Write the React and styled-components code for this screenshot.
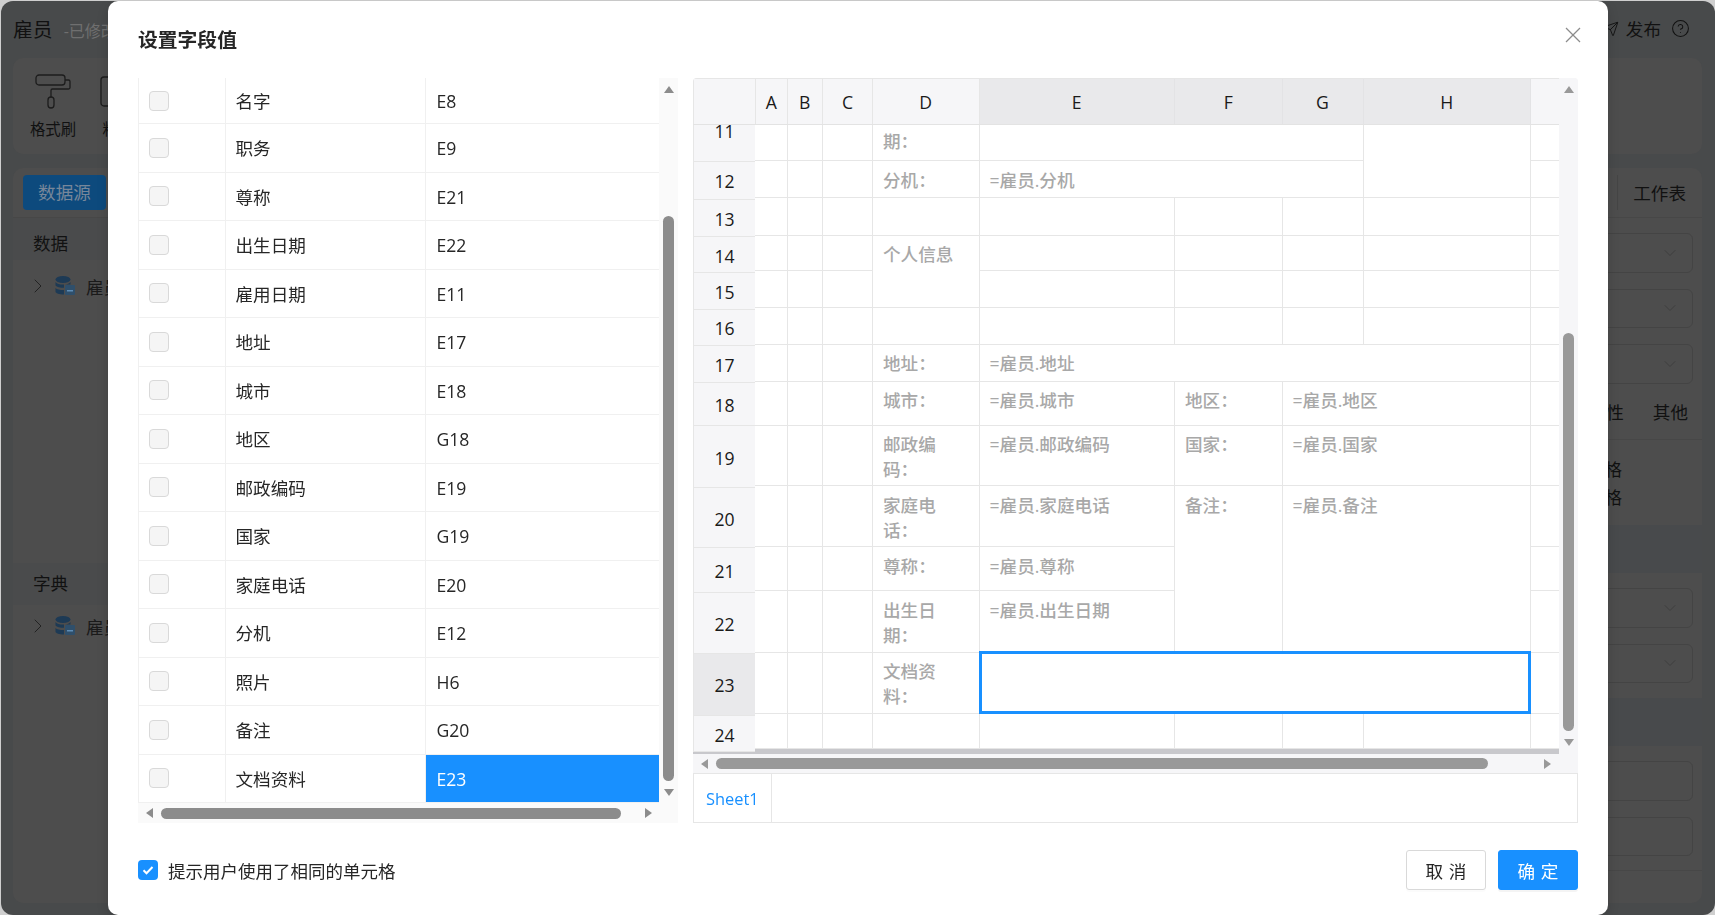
import React from 'react';
import styled, { createGlobalStyle } from 'styled-components';
import { Send, CircleHelp, ChevronDown, ChevronRight } from 'lucide-react';

const HEAD_COLS = '32.5px 35.5px 50px 106.5px 195.5px 107.5px 81px 167.5px 28px';
const CELL_COLS = '32.5px 35.5px 50px 106.5px 195.5px 107.5px 81px 167.5px 29px';

const fields = [
  ['名字', 'E8'],
  ['职务', 'E9'],
  ['尊称', 'E21'],
  ['出生日期', 'E22'],
  ['雇用日期', 'E11'],
  ['地址', 'E17'],
  ['城市', 'E18'],
  ['地区', 'G18'],
  ['邮政编码', 'E19'],
  ['国家', 'G19'],
  ['家庭电话', 'E20'],
  ['分机', 'E12'],
  ['照片', 'H6'],
  ['备注', 'G20'],
  ['文档资料', 'E23'],
];

const columns = [
  { name: 'A' },
  { name: 'B' },
  { name: 'C' },
  { name: 'D' },
  { name: 'E', active: true },
  { name: 'F', active: true },
  { name: 'G', active: true },
  { name: 'H', active: true },
  { name: '' },
];

const rowHeads = [
  [11, 63],
  [12, 37.5],
  [13, 37.5],
  [14, 36],
  [15, 36.5],
  [16, 36.5],
  [17, 37],
  [18, 43],
  [19, 62],
  [20, 60],
  [21, 45],
  [22, 60.5],
  [23, 62.5],
  [24, 36],
];

const rowHeights = [63.5, 37, 37.5, 35.5, 37, 36.5, 37, 44, 60.5, 61, 44, 61.5, 61, 35.5];

const blank = (n = 1) => Array.from({ length: n }, () => ({}));

// one entry per row, merged cells carry col / row spans
const sheetRows = [
  [...blank(3), { text: '雇用日期：' }, { text: '=雇员.雇用日期', col: 3 }, { row: 2 }, {}],
  [...blank(3), { text: '分机：' }, { text: '=雇员.分机', col: 3 }, {}],
  blank(9),
  [...blank(3), { text: '个人信息', row: 2 }, ...blank(5)],
  [...blank(3), ...blank(5)],
  blank(9),
  [...blank(3), { text: '地址：' }, { text: '=雇员.地址', col: 4 }, {}],
  [...blank(3), { text: '城市：' }, { text: '=雇员.城市' }, { text: '地区：' }, { text: '=雇员.地区', col: 2 }, {}],
  [...blank(3), { text: '邮政编码：' }, { text: '=雇员.邮政编码' }, { text: '国家：' }, { text: '=雇员.国家', col: 2 }, {}],
  [...blank(3), { text: '家庭电话：' }, { text: '=雇员.家庭电话' }, { text: '备注：', row: 3 }, { text: '=雇员.备注', col: 2, row: 3 }, {}],
  [...blank(3), { text: '尊称：' }, { text: '=雇员.尊称' }, {}],
  [...blank(3), { text: '出生日期：' }, { text: '=雇员.出生日期' }, {}],
  [...blank(3), { text: '文档资料：' }, { col: 4, selected: true }, {}],
  blank(9),
];

const App = () => {
  return (
    <>
      <GlobalStyle />
      <Page>
        <TopBar>
          <DocTitle>
            雇员 <DocState>-已修改</DocState>
          </DocTitle>
          <TopActions>
            <Send size={16} strokeWidth={1.4} />
            <span>发布</span>
            <CircleHelp size={19} strokeWidth={1.3} />
          </TopActions>
        </TopBar>

        <ToolPanel>
          <ToolItem>
            <svg width="36" height="36" viewBox="0 0 36 36" fill="none" stroke="#1c1c1c" strokeWidth="1.3">
              <rect x="1" y="1" width="29" height="10" rx="3" />
              <path d="M30 6h3.5a1.5 1.5 0 0 1 1.5 1.5v6a1.5 1.5 0 0 1-1.5 1.5H17.5a1.5 1.5 0 0 0-1.5 1.5V23" />
              <rect x="13" y="23" width="6" height="11" rx="3" />
            </svg>
            <span>格式刷</span>
          </ToolItem>
          <ToolItem>
            <svg width="36" height="36" viewBox="0 0 36 36" fill="none" stroke="#1c1c1c" strokeWidth="1.3">
              <rect x="1" y="3" width="30" height="29" rx="3" />
            </svg>
            <span>粘贴</span>
          </ToolItem>
        </ToolPanel>

        <MainPanel>
          <PanelTabs>
            <SourceButton>数据源</SourceButton>
            <SheetTab>工作表</SheetTab>
          </PanelTabs>
          <PanelColumns>
            <LeftColumn>
              <SectionHead>数据</SectionHead>
              <TreeRow $height={52}>
                <ChevronRight size={24} strokeWidth={1} color="#222" />
                <DbIcon />
                <span>雇员</span>
              </TreeRow>
              <TreeSpacer />
              <SectionHead $raised>字典</SectionHead>
              <TreeRow $height={42}>
                <ChevronRight size={24} strokeWidth={1} color="#222" />
                <DbIcon />
                <span>雇员</span>
              </TreeRow>
            </LeftColumn>

            <RightColumn>
              <SelectGroup $height={307}>
                <Select><ChevronDown size={20} strokeWidth={1} /></Select>
                <Select><ChevronDown size={20} strokeWidth={1} /></Select>
                <Select><ChevronDown size={20} strokeWidth={1} /></Select>
                <PropTabs>
                  <span>属性</span>
                  <span>其他</span>
                </PropTabs>
                <CheckLines>
                  <span>显示表格</span>
                  <span>隐藏表格</span>
                </CheckLines>
              </SelectGroup>
              <DarkBand />
              <SelectGroup $height={125}>
                <Select><ChevronDown size={20} strokeWidth={1} /></Select>
                <Select><ChevronDown size={20} strokeWidth={1} /></Select>
              </SelectGroup>
              <DarkBand />
              <SelectGroup $height={125} $line>
                <Select />
                <Select />
              </SelectGroup>
            </RightColumn>
          </PanelColumns>
        </MainPanel>
      </Page>

      <Overlay>
        <Modal>
          <ModalHeader>
            <ModalTitle>设置字段值</ModalTitle>
            <CloseButton>
              <svg width="16" height="16" viewBox="0 0 16 16" stroke="#8c8c8c" strokeWidth="1.3">
                <line x1="1" y1="1" x2="15" y2="15" />
                <line x1="15" y1="1" x2="1" y2="15" />
              </svg>
            </CloseButton>
          </ModalHeader>

          <ModalBody>
            <FieldPane>
              <FieldList>
                {fields.map(([name, cell], idx) => (
                  <FieldRow key={name} $first={idx === 0}>
                    <FieldCheck>
                      <EmptyCheck />
                    </FieldCheck>
                    <FieldName>{name}</FieldName>
                    <FieldCell $selected={cell === 'E23'}>{cell}</FieldCell>
                  </FieldRow>
                ))}
              </FieldList>
              <VTrack $bg="#fafafa" $color="#8c8c8c">
                <ArrowUp />
                <VThumb $gap={123} $height={565} />
                <ArrowDown />
              </VTrack>
              <FieldHTrack $bg="#fafafa" $color="#8c8c8c" $pad={8}>
                <ArrowLeft />
                <HThumb $gap={8} $width={460} />
                <ArrowRight $gap={24} />
              </FieldHTrack>
            </FieldPane>

            <SheetPane>
              <SheetGrid>
                <SheetHeader>
                  <Corner />
                  <HeaderCols>
                    {columns.map((c, idx) => (
                      <ColHead key={idx} $active={c.active} $first={idx === 0}>{c.name}</ColHead>
                    ))}
                  </HeaderCols>
                </SheetHeader>
                <SheetBody>
                  <RowHeads>
                    {rowHeads.map(([n, h]) => (
                      <RowHead key={n} $height={h} $active={n === 23}>{n}</RowHead>
                    ))}
                  </RowHeads>
                  <CellGrid>
                    {sheetRows.flat().map((c, idx) => (
                      <Cell key={idx} $col={c.col} $row={c.row} $selected={c.selected}>{c.text}</Cell>
                    ))}
                  </CellGrid>
                </SheetBody>
                <HTrack $bg="#f6f6f8" $color="#999" $pad={8}>
                  <ArrowLeft />
                  <HThumb $gap={8} $width={772} />
                  <ArrowRight $gap={56} />
                </HTrack>
                <SheetVTrack $bg="#f6f6f8" $color="#999">
                  <ArrowUp />
                  <VThumb $gap={240} $height={398} />
                  <ArrowDown />
                </SheetVTrack>
              </SheetGrid>
              <SheetTabs>
                <SheetName>Sheet1</SheetName>
              </SheetTabs>
            </SheetPane>
          </ModalBody>

          <ModalFooter>
            <CheckLabel>
              <CheckedBox>
                <svg width="14" height="14" viewBox="0 0 14 14" fill="none" stroke="#fff" strokeWidth="2">
                  <path d="M2.5 7.2l3 3 6-6.2" />
                </svg>
              </CheckedBox>
              提示用户使用了相同的单元格
            </CheckLabel>
            <FooterButtons>
              <CancelButton>取 消</CancelButton>
              <OkButton>确 定</OkButton>
            </FooterButtons>
          </ModalFooter>
        </Modal>
      </Overlay>
    </>
  );
};

const DbIcon = () => (
  <svg width="20" height="20" viewBox="0 0 20 20">
    <ellipse cx="8" cy="3.5" rx="7.5" ry="3.5" fill="#1d3a55" />
    <path d="M.5 6c1.5 2 4 2.6 7.5 2.6S14 8 15.5 6v2.4H9v3.4c-4 0-7.2-.8-8.5-2.4z" fill="#1d3a55" />
    <path d="M.5 12c1.5 1.4 4 2 8.5 2v4.6c-4.6 0-8.5-1-8.5-3z" fill="#1d3a55" />
    <rect x="10" y="9" width="10" height="10" rx="1" fill="#2f4f6b" />
    <rect x="12" y="14" width="6" height="1.5" fill="#5d8cb5" />
  </svg>
);

const GlobalStyle = createGlobalStyle`
  html, body {
    margin: 0;
    height: 915px;
    overflow: hidden;
    background: #cfcfcf;
    font-family: "Open Sans", "Noto Sans CJK SC", sans-serif;
    font-size: 17.6px;
    color: #262626;
  }
  * {
    box-sizing: border-box;
  }
`;

const Page = styled.div`
  margin: 1px 0 0 1px;
  height: 914px;
  padding: 0 13px 12px 12px;
  border-radius: 12px;
  background: #484a4b;
  display: flex;
  flex-direction: column;
  color: #111;
`;

const TopBar = styled.div`
  height: 57px;
  flex: none;
  display: flex;
  align-items: center;
  justify-content: space-between;
  padding-right: 12px;
  padding-bottom: 2px;
`;

const DocTitle = styled.div`
  font-size: 19.8px;
  color: #111;
`;

const DocState = styled.span`
  margin-left: 6px;
  font-size: 16px;
  color: #6f6f6f;
`;

const TopActions = styled.div`
  display: flex;
  align-items: center;
  gap: 7px;
  & > span {
    margin-right: 3px;
  }
`;

const ToolPanel = styled.div`
  height: 96px;
  flex: none;
  margin-bottom: 14px;
  padding: 16px 0 0 18px;
  display: flex;
  gap: 21px;
  border-radius: 10px;
  background: #4d4d4d;
`;

const ToolItem = styled.div`
  width: 44px;
  display: flex;
  flex-direction: column;
  align-items: center;
  gap: 9px;
  font-size: 15.4px;
  line-height: 22px;
  white-space: nowrap;
`;

const MainPanel = styled.div`
  flex: 1;
  display: flex;
  flex-direction: column;
  border-radius: 10px;
  background: #4d4d4d;
  overflow: hidden;
`;

const PanelTabs = styled.div`
  height: 50px;
  flex: none;
  display: flex;
  align-items: center;
  justify-content: space-between;
  padding: 0 16px 0 10px;
  border-bottom: 1px solid #474747;
`;

const SourceButton = styled.div`
  width: 83px;
  height: 35px;
  border-radius: 4px;
  background: #0d4a7d;
  color: #77879a;
  text-align: center;
  line-height: 35px;
  font-size: 17.6px;
`;

const SheetTab = styled.div`
  position: relative;
  color: #111;
  &::before {
    content: '';
    position: absolute;
    left: -16px;
    top: -5px;
    bottom: -5px;
    width: 1px;
    background: #454545;
  }
`;

const PanelColumns = styled.div`
  flex: 1;
  display: flex;
  justify-content: space-between;
`;

const LeftColumn = styled.div`
  width: 320px;
  display: flex;
  flex-direction: column;
`;

const SectionHead = styled.div`
  height: 42px;
  flex: none;
  padding-left: 20px;
  line-height: ${p => (p.$raised ? 40 : 50)}px;
  background: #4a4b4c;
`;

const TreeRow = styled.div`
  height: ${p => p.$height}px;
  flex: none;
  padding-left: 13px;
  display: flex;
  align-items: center;
  gap: 5px;
  color: #1a1a1a;
  span {
    margin-left: 6px;
  }
`;

const TreeSpacer = styled.div`
  flex: none;
  height: 251px;
`;

const RightColumn = styled.div`
  width: 300px;
  display: flex;
  flex-direction: column;
`;

const SelectGroup = styled.div`
  height: ${p => p.$height}px;
  flex: none;
  padding: 15px 9px 0 0;
  display: flex;
  flex-direction: column;
  gap: 16px;
  border-bottom: ${p => (p.$line ? '1px solid #474747' : 'none')};
`;

const DarkBand = styled.div`
  height: 48px;
  flex: none;
  background: #484a4c;
`;

const Select = styled.div`
  height: 39.5px;
  flex: none;
  padding-right: 12px;
  display: flex;
  align-items: center;
  justify-content: flex-end;
  border: 1px solid #444;
  border-radius: 6px;
  color: #3b3b3b;
`;

const PropTabs = styled.div`
  height: 41px;
  margin-top: -1px;
  padding-right: 14px;
  display: flex;
  justify-content: flex-end;
  gap: 29px;
  border-bottom: 1px solid #474747;
  margin-right: -9px;
`;

const CheckLines = styled.div`
  margin-top: -1px;
  padding-right: 71px;
  display: flex;
  flex-direction: column;
  align-items: flex-end;
  line-height: 28px;
`;

const Overlay = styled.div`
  position: fixed;
  inset: 0;
  padding: 1px 0 0 108px;
`;

const Modal = styled.div`
  width: 1500px;
  height: 914px;
  display: flex;
  flex-direction: column;
  padding: 0 30px;
  border-radius: 10px;
  background: #fff;
  box-shadow: 0 4px 12px rgba(0, 0, 0, 0.15);
`;

const ModalHeader = styled.div`
  height: 77px;
  flex: none;
  display: flex;
  align-items: flex-start;
  justify-content: space-between;
  padding-top: 25px;
`;

const ModalTitle = styled.div`
  font-size: 19.8px;
  font-weight: 700;
  line-height: 28px;
  color: #262626;
`;

const CloseButton = styled.div`
  display: flex;
  margin-top: 1px;
  margin-right: -3px;
`;

const ModalBody = styled.div`
  height: 745px;
  flex: none;
  display: flex;
  gap: 15px;
`;

const FieldPane = styled.div`
  width: 540px;
  display: grid;
  grid-template-columns: 521px 19px;
  grid-template-rows: 725px 20px;
`;

const FieldList = styled.div`
  border-left: 1px solid #f0f0f0;
  overflow: hidden;
`;

const FieldRow = styled.div`
  height: ${p => (p.$first ? 46.2 : 48.5)}px;
  display: grid;
  grid-template-columns: 86.5px 200px 1fr;
  border-bottom: 1px solid #f0f0f0;
  line-height: 24px;
`;

const FieldCheck = styled.div`
  display: flex;
  align-items: center;
  padding-left: 10px;
  border-right: 1px solid #f0f0f0;
`;

const EmptyCheck = styled.div`
  width: 20px;
  height: 20px;
  border: 1px solid #d9d9d9;
  border-radius: 4px;
  background: #f5f5f5;
`;

const FieldName = styled.div`
  display: flex;
  align-items: center;
  padding: 1px 0 0 10px;
  border-right: 1px solid #f0f0f0;
  color: #262626;
`;

const FieldCell = styled.div`
  display: flex;
  align-items: center;
  padding: 1px 0 0 11px;
  background: ${p => (p.$selected ? '#1890ff' : '#fff')};
  color: ${p => (p.$selected ? '#fff' : '#262626')};
`;

const VTrack = styled.div`
  display: flex;
  flex-direction: column;
  align-items: center;
  padding-top: 8px;
  background: ${p => p.$bg};
  color: ${p => p.$color};
`;

const HTrack = styled.div`
  display: flex;
  align-items: center;
  padding-left: ${p => p.$pad}px;
  background: ${p => p.$bg};
  color: ${p => p.$color};
`;

const FieldHTrack = styled(HTrack)`
  grid-column: 1 / 3;
`;

const VThumb = styled.div`
  width: 11px;
  height: ${p => p.$height}px;
  margin: ${p => p.$gap}px 0 8px;
  border-radius: 6px;
  background: currentColor;
`;

const HThumb = styled.div`
  width: ${p => p.$width}px;
  height: 11px;
  margin-left: ${p => p.$gap}px;
  border-radius: 6px;
  background: currentColor;
`;

const ArrowUp = styled.div`
  width: 0;
  height: 0;
  flex: none;
  border-left: 5px solid transparent;
  border-right: 5px solid transparent;
  border-bottom: 7px solid currentColor;
`;

const ArrowDown = styled(ArrowUp)`
  border-bottom: none;
  border-top: 7px solid currentColor;
`;

const ArrowLeft = styled.div`
  width: 0;
  height: 0;
  flex: none;
  border-top: 5px solid transparent;
  border-bottom: 5px solid transparent;
  border-right: 7px solid currentColor;
`;

const ArrowRight = styled.div`
  width: 0;
  height: 0;
  flex: none;
  margin-left: ${p => p.$gap}px;
  border-top: 5px solid transparent;
  border-bottom: 5px solid transparent;
  border-left: 7px solid currentColor;
`;

const SheetPane = styled.div`
  width: 885px;
  display: flex;
  flex-direction: column;
`;

const SheetGrid = styled.div`
  height: 695px;
  flex: none;
  display: grid;
  grid-template-columns: 866px 19px;
  grid-template-rows: 47px 629px 19px;
  border-radius: 4px 4px 0 0;
  overflow: hidden;
  background: #f6f6f8;
`;

const SheetHeader = styled.div`
  display: flex;
  border-top: 1px solid #e6e6e6;
  border-bottom: 1px solid #e3e3e3;
`;

const Corner = styled.div`
  width: 62px;
  flex: none;
  border-left: 1px solid #e6e6e6;
  background: #f6f6f8;
`;

const HeaderCols = styled.div`
  flex: 1;
  display: grid;
  grid-template-columns: ${HEAD_COLS};
`;

const ColHead = styled.div`
  display: flex;
  align-items: center;
  justify-content: center;
  padding-top: 1px;
  border-right: 1px solid ${p => (p.$active ? '#e3e3e5' : '#e6e6e6')};
  border-left: ${p => (p.$first ? '1px solid #e6e6e6' : 'none')};
  background: ${p => (p.$active ? '#e9e9eb' : '#f6f6f8')};
  color: #1a1a1a;
  &:last-child {
    border-right: none;
  }
`;

const SheetBody = styled.div`
  grid-column: 1;
  display: flex;
  overflow: hidden;
  background: #c8c8cc;
`;

const RowHeads = styled.div`
  width: 62px;
  height: 627px;
  flex: none;
  border-left: 1px solid #e6e6e6;
  overflow: hidden;
  background: #f6f6f8;
`;

const RowHead = styled.div`
  height: ${p => p.$height}px;
  display: flex;
  align-items: center;
  justify-content: center;
  padding-top: 2px;
  border-bottom: 1px solid #e6e6e6;
  background: ${p => (p.$active ? '#e9e9eb' : '#f6f6f8')};
  color: #1a1a1a;
  &:first-child {
    margin-top: -26px;
  }
`;

const CellGrid = styled.div`
  width: 805px;
  flex: none;
  align-self: flex-start;
  margin-top: -27.5px;
  display: grid;
  grid-template-columns: ${CELL_COLS};
  grid-template-rows: ${rowHeights.map(h => `${h}px`).join(' ')};
  background: #fff;
`;

const Cell = styled.div`
  grid-column: span ${p => p.$col || 1};
  grid-row: span ${p => p.$row || 1};
  padding: 6.5px 10px 0;
  border-right: 1px solid #e6e6e6;
  border-bottom: 1px solid #e6e6e6;
  line-height: 25px;
  font-weight: 500;
  color: #a8a8a8;
  overflow: hidden;
  ${p =>
    p.$selected &&
    `
    margin: -1.5px 0 0 -1px;
    border: 3px solid #1890ff;
  `}
`;

const SheetVTrack = styled(VTrack)`
  grid-column: 2;
  grid-row: 1 / 4;
`;

const SheetTabs = styled.div`
  height: 50px;
  flex: none;
  display: flex;
  border: 1px solid #e6e6e6;
`;

const SheetName = styled.div`
  width: 78px;
  display: flex;
  align-items: center;
  padding-left: 12px;
  border-right: 1px solid #e6e6e6;
  font-size: 16.4px;
  color: #1890ff;
`;

const ModalFooter = styled.div`
  height: 40px;
  flex: none;
  margin-top: 27px;
  display: flex;
  align-items: center;
  justify-content: space-between;
`;

const CheckLabel = styled.label`
  display: flex;
  align-items: center;
  gap: 10px;
  font-size: 17.5px;
  color: #262626;
`;

const CheckedBox = styled.span`
  width: 20px;
  height: 20px;
  display: flex;
  align-items: center;
  justify-content: center;
  border-radius: 4px;
  background: #1890ff;
`;

const FooterButtons = styled.div`
  display: flex;
  gap: 12px;
`;

const CancelButton = styled.button`
  width: 80px;
  height: 40px;
  padding: 0;
  border: 1px solid #d9d9d9;
  border-radius: 3px;
  background: #fff;
  color: #262626;
  font: inherit;
  word-spacing: 1px;
  box-shadow: 0 2px 0 rgba(0, 0, 0, 0.015);
`;

const OkButton = styled(CancelButton)`
  border-color: #1890ff;
  background: #1890ff;
  color: #fff;
  box-shadow: 0 2px 0 rgba(0, 0, 0, 0.045);
`;

export default App;
